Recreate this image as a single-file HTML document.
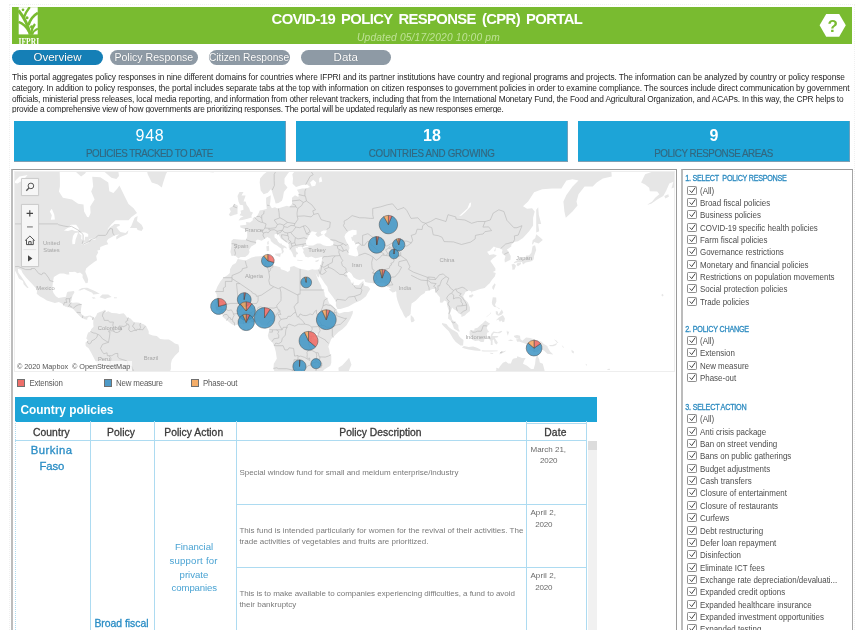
<!DOCTYPE html>
<html><head><meta charset="utf-8"><title>COVID-19 Policy Response (CPR) Portal</title>
<style>
html,body{margin:0;padding:0;background:#fff;}
body{width:867px;height:630px;overflow:hidden;position:relative;font-family:"Liberation Sans", sans-serif;color:#333;}
div,span{box-sizing:border-box;}
#root{position:absolute;left:0;top:0;width:867px;height:630px;overflow:hidden;will-change:transform;}
.abs{position:absolute;}
.t{position:absolute;white-space:nowrap;}
#hdr{position:absolute;left:12px;top:7px;width:840px;height:37px;background:#79bb30;overflow:hidden;}
.pill{position:absolute;top:50px;height:15px;border-radius:8px;color:#fff;font-size:11.5px;line-height:15px;text-align:center;white-space:nowrap;text-shadow:0 0 1px rgba(0,0,0,.35);}
.kpi{position:absolute;top:121px;height:40.6px;background:#1da4d7;border-bottom:1px solid #7f9fb2;border-right:1px solid #6f9fba;}
.cb{position:absolute;left:687.2px;width:9.7px;height:9.2px;border:1px solid #8f8f8f;border-radius:1.2px;background:#fff;}
.cb svg{position:absolute;left:-0.6px;top:-0.6px;}
.lg{position:absolute;top:379.3px;width:8px;height:8px;border:1px solid #6f6f6f;}
.vl{position:absolute;width:1px;background:#addbf1;}
.hl{position:absolute;height:1px;background:#addbf1;}
.ctrl{position:absolute;left:21.2px;width:17.4px;background:#f6f6f6;border:1px solid #cdcdcd;border-radius:1px;box-shadow:0 0 1px rgba(0,0,0,.15);}
</style></head><body><div id="root">
<div class="abs" style="left:9px;top:4px;width:846px;height:1px;border-top:1px dotted #f0f0f0"></div>
<div class="abs" style="left:9px;top:4px;width:1px;height:626px;border-left:1px dotted #f0f0f0"></div>
<div class="abs" style="left:854px;top:4px;width:1px;height:626px;border-left:1px dotted #f0f0f0"></div>
<div id="hdr">
  <svg class="abs" style="left:6px;top:0" width="22" height="37" viewBox="0 0 22 37">
    <rect x="0.7" y="0.2" width="19" height="27.2" fill="#fff"/>
    <g fill="none" stroke="#79bb30" stroke-linecap="butt">
      <path d="M12.2 27.6C10.5 20 6.5 10.5 0.5 3.4" stroke-width="3"/>
      <path d="M5.6 11C7 7 9 3.4 11.8 0" stroke-width="2.3"/>
      <path d="M10.8 24.6C8.5 19.8 4.5 16.3 0.5 14.9" stroke-width="2.2"/>
      <path d="M10.4 18.2C12 13 15.5 8.3 19.9 5.8" stroke-width="2.7"/>
      <path d="M12.9 27.6C13.2 23.5 14.6 20 17 17" stroke-width="2.2"/>
      <path d="M14 27.6C15.2 24.8 17.2 22.7 19.9 21.6" stroke-width="2"/>
    </g>
    <g fill="#79bb30"><circle cx="5" cy="2.8" r="1.35"/><circle cx="9" cy="10.7" r="1.55"/><circle cx="13.7" cy="20" r="1.7"/></g>
    <text x="0.5" y="37.7" font-family='"Liberation Serif", serif' font-size="11" font-weight="bold" fill="#fff" textLength="20.6" lengthAdjust="spacingAndGlyphs">IFPRI</text>
  </svg>
<div class="t" style="left:259.60px;top:4.00px;font-size:14.80px;line-height:16.00px;color:#fff;letter-spacing:-0.605px;word-spacing:2.60px;font-weight:bold;">COVID-19 POLICY RESPONSE (CPR) PORTAL</div>
<div class="t" style="left:345.00px;top:25.00px;font-size:10.20px;line-height:11.00px;color:#bfe296;letter-spacing:0.192px;font-style:italic;">Updated 05/17/2020 10:00 pm</div>
  <svg class="abs" style="left:806px;top:6px" width="30" height="26" viewBox="0 0 30 26">
    <path d="M1.6 12.3L8.2 0.9H21.2L27.8 12.3L21.2 23.7H8.2Z" fill="#fff"/>
    <text x="14.7" y="18.6" text-anchor="middle" font-family='"Liberation Sans", sans-serif' font-weight="bold" font-size="17" fill="#79bb30">?</text>
  </svg>
</div>
<div class="pill" style="left:12px;width:91px;background:#157fb6;">Overview</div>
<div class="pill" style="left:110px;width:87.5px;background:#8e9aa5;"><span style="display:inline-block;transform:scaleX(0.92)">Policy Response</span></div>
<div class="pill" style="left:208.5px;width:81.5px;background:#8e9aa5;"><span style="display:inline-block;transform:scaleX(0.89);margin:0 -10px">Citizen Response</span></div>
<div class="pill" style="left:300.5px;width:90.5px;background:#8e9aa5;">Data</div>
<div class="abs" style="left:0;top:66px;width:867px;height:47.3px;overflow:hidden">
<div class="t" style="left:12.00px;top:6.00px;font-size:8.30px;line-height:10.00px;color:#262626;letter-spacing:-0.075px;">This portal aggregates policy responses in nine different domains for countries where IFPRI and its partner institutions have country and regional programs and projects. The information can be analyzed by country or policy response</div>
<div class="t" style="left:12.00px;top:17.00px;font-size:8.30px;line-height:10.00px;color:#262626;letter-spacing:-0.125px;">category. In addition to policy responses, the portal includes separate tabs at the top with information on citizen responses to government policies in order to examine compliance. The sources include direct communication by government</div>
<div class="t" style="left:12.00px;top:28.00px;font-size:8.30px;line-height:10.00px;color:#262626;letter-spacing:-0.156px;">officials, ministerial press releases, local media reporting, and information from other relevant trackers, including that from the International Monetary Fund, the Food and Agricultural Organization, and ACAPs. In this way, the CPR helps to</div>
<div class="t" style="left:12.00px;top:38.00px;font-size:8.30px;line-height:10.00px;color:#262626;letter-spacing:-0.201px;">provide a comprehensive view of how governments are prioritizing responses. The portal will be updated regularly as new responses emerge.</div>
</div>
<div class="kpi" style="left:14.0px;width:272.0px"></div>
<div class="t" style="left:135.50px;top:127.00px;font-size:16.00px;line-height:17.00px;color:#fff;letter-spacing:0.768px;">948</div>
<div class="t" style="left:86.00px;top:148.00px;font-size:9.80px;line-height:11.00px;color:#33677f;letter-spacing:-0.498px;transform:scaleY(1.150);transform-origin:0 9px;-webkit-text-stroke:0.15px #33677f;">POLICIES TRACKED TO DATE</div>
<div class="kpi" style="left:296.0px;width:272.0px"></div>
<div class="t" style="left:423.10px;top:127.00px;font-size:16.00px;line-height:17.00px;color:#fff;font-weight:bold;">18</div>
<div class="t" style="left:368.85px;top:148.00px;font-size:9.80px;line-height:11.00px;color:#33677f;letter-spacing:-0.312px;transform:scaleY(1.150);transform-origin:0 9px;-webkit-text-stroke:0.15px #33677f;">COUNTRIES AND GROWING</div>
<div class="kpi" style="left:578.0px;width:272.0px"></div>
<div class="t" style="left:709.55px;top:127.00px;font-size:16.00px;line-height:17.00px;color:#fff;font-weight:bold;">9</div>
<div class="t" style="left:654.30px;top:148.00px;font-size:9.80px;line-height:11.00px;color:#33677f;letter-spacing:-0.461px;transform:scaleY(1.150);transform-origin:0 9px;-webkit-text-stroke:0.15px #33677f;">POLICY RESPONSE AREAS</div>
<div class="abs" style="left:11px;top:169px;width:666px;height:470px;border-top:1px solid #9a9a9a;border-right:1px solid #9a9a9a;border-left:2px solid #bdbdbd;background:#fff"></div>
<div class="abs" style="left:14px;top:171px;width:661px;height:201px;border:1px solid #eeeeee"></div>
<svg style="position:absolute;left:15px;top:172px" width="659" height="199" viewBox="0 0 659 199"><rect width="659" height="199" fill="#fff"/><path d="M-47.9 -44.3L42.9 -44.3L44.9 6.5L44.9 14.6L43.9 19.6L47.9 25.8L57.0 27.6L63.1 31.8L68.5 32.5L69.1 39.5L72.2 44.9L73.8 45.2L75.6 41.1L75.2 34.5L79.6 27.6L76.2 19.6L78.2 14.6L77.2 4.8L85.3 5.3L93.3 10.6L94.3 19.2L98.4 21.1L102.4 16.5L104.4 13.4L109.5 24.0L113.5 32.1L118.6 36.2L122.0 41.1L116.5 44.9L113.5 48.3L100.6 48.3L96.4 52.2L92.3 57.2L95.4 54.9L99.4 51.9L104.4 51.9L104.8 53.7L101.4 54.9L103.4 57.7L105.4 60.0L110.5 61.1L113.5 58.3L112.5 61.7L111.5 62.5L105.4 65.0L101.4 67.5L101.2 64.8L104.4 62.3L99.4 63.4L93.3 66.9L91.7 69.3L93.3 72.2L90.3 73.0L85.3 75.1L84.9 77.9L82.2 78.4L83.2 80.4L81.2 84.1L82.0 88.3L79.2 89.9L77.2 91.6L74.2 93.7L71.1 96.5L70.3 99.7L72.2 104.4L73.2 107.7L72.6 110.9L70.7 111.2L69.5 109.0L67.5 105.5L67.7 102.8L65.1 100.6L62.5 101.2L60.0 99.7L57.0 99.9L54.0 100.1L54.4 102.4L52.0 102.6L48.9 101.5L44.9 101.5L42.5 102.8L38.9 105.0L38.0 109.4L37.2 116.9L38.5 121.1L40.9 124.3L43.5 125.9L47.9 125.3L51.0 124.7L52.0 120.5L53.0 119.7L59.0 119.0L59.4 120.5L57.6 123.6L57.0 125.7L56.4 128.4L55.4 130.6L58.0 130.8L61.1 130.6L64.1 130.8L66.7 132.4L66.1 136.5L65.7 139.5L66.1 141.5L68.1 143.8L70.1 144.6L73.2 143.8L75.2 143.4L78.2 145.0L79.2 146.4L78.4 148.4L76.8 145.8L74.2 144.6L72.4 146.0L72.2 147.8L69.7 147.2L67.5 146.0L65.9 145.2L63.1 142.4L61.5 140.7L58.0 136.7L56.0 136.1L53.0 135.1L50.0 134.5L46.9 131.4L43.9 130.0L39.9 131.0L35.8 129.8L31.8 128.4L28.8 126.5L24.7 124.3L21.7 121.8L22.1 119.0L20.7 115.9L16.7 111.6L13.6 108.3L10.6 105.0L7.6 101.0L6.2 97.8L2.9 96.7L3.3 100.6L6.6 105.0L9.6 109.4L11.6 113.1L13.6 115.7L12.2 115.9L8.6 112.2L8.0 109.0L3.9 106.6L2.5 103.3L0.5 99.4L-1.7 94.9L-4.3 91.3L-8.6 90.2L-11.6 84.6L-12.6 82.2L-15.6 75.9L-16.2 69.3L-15.6 60.0L-17.0 53.7L-13.6 51.9L-27.7 32.8L-37.8 22.2L-47.9 14.6ZM73.2 -44.3L77.2 -2.1L85.3 -4.4L89.3 -0.3L96.4 5.7L101.4 6.9L104.0 4.0L103.4 0.1L106.5 -4.4L110.5 -11.4L109.5 -44.3ZM59.0 -2.1L62.1 1.0L66.1 4.4L70.1 1.4L72.2 -2.1L69.1 -11.4L61.1 -11.4ZM146.8 15.4L142.8 12.6L136.7 10.6L132.7 2.3L129.7 -11.4L157.9 -11.4L150.9 2.3L148.2 10.6ZM114.9 56.0L116.5 53.4L119.6 45.8L122.6 43.9L122.0 48.9L126.6 52.8L128.3 56.3L126.6 58.9L122.6 58.0L121.6 56.0ZM63.1 118.2L67.1 115.9L72.2 115.7L79.2 118.8L84.9 121.8L78.2 122.4L77.2 120.7L72.2 118.4L69.1 117.1L65.1 118.4ZM84.5 125.3L87.3 122.4L93.3 122.6L96.6 125.1L92.3 125.9L90.3 126.9ZM76.6 125.5L79.2 125.3L80.8 126.3L78.2 126.7ZM99.0 125.3L102.2 125.5L101.8 126.3L99.0 126.3ZM79.2 146.4L81.2 143.8L82.2 141.3L84.9 140.1L87.3 139.3L89.9 137.7L90.7 139.5L89.7 140.7L93.3 139.3L96.8 140.9L101.4 141.3L104.4 142.1L108.5 141.3L109.9 142.4L111.9 145.2L115.5 146.4L119.0 150.3L123.6 150.5L128.7 152.3L131.1 153.9L133.7 159.2L133.7 162.1L137.7 163.5L141.8 164.1L145.2 167.0L149.8 167.6L153.9 167.6L156.9 169.3L159.9 171.5L163.4 172.5L164.2 175.8L164.0 179.8L159.9 183.7L156.9 187.7L155.9 191.8L155.9 196.9L154.5 201.0L152.9 204.1L151.9 206.2L150.9 214.8L92.3 214.8L92.7 202.0L92.5 198.5L90.3 196.4L85.3 193.8L80.8 189.7L78.8 185.7L76.2 180.8L73.6 176.2L70.7 173.9L70.5 170.5L73.2 168.6L71.3 166.4L72.2 163.1L73.2 160.5L75.4 159.8L76.2 157.2L78.6 154.7L78.2 151.3L78.4 148.4L76.8 145.8ZM222.7 87.1L230.6 88.5L236.6 85.4L240.7 84.4L248.7 84.1L254.8 83.4L256.8 84.1L255.2 85.4L256.0 87.8L254.8 91.3L256.8 93.2L260.8 93.9L265.3 95.3L265.9 97.2L269.9 98.5L272.9 99.9L275.0 98.3L275.2 94.9L279.0 93.9L281.4 95.3L285.1 96.7L290.1 97.8L293.1 98.5L297.2 97.2L299.8 97.8L303.6 97.6L305.0 101.7L303.8 105.5L302.4 104.6L300.4 100.8L302.2 105.5L303.2 108.3L306.2 113.7L306.6 115.9L309.3 120.1L309.9 124.3L312.3 126.3L314.3 131.4L317.3 133.4L320.4 136.5L322.0 137.5L321.8 139.5L324.4 141.5L329.4 140.1L333.5 139.9L337.9 138.7L337.7 141.5L335.5 146.4L331.5 153.3L327.4 157.2L323.4 160.1L319.4 164.1L316.3 167.0L314.7 170.9L313.3 174.8L314.3 177.8L314.9 181.8L316.3 183.7L316.3 190.8L315.3 193.8L309.3 197.5L305.2 202.0L305.2 206.2L306.2 214.8L263.9 214.8L263.7 206.2L260.8 202.0L258.4 196.9L258.8 191.8L261.8 186.7L260.8 179.8L259.2 173.9L257.8 170.9L253.8 167.0L252.8 163.5L253.8 160.1L254.4 156.2L252.8 153.9L248.7 153.5L246.7 153.7L243.7 149.8L239.6 149.8L236.6 150.3L232.6 151.9L228.5 152.3L224.5 151.9L219.5 153.5L216.4 151.9L212.4 148.8L208.4 145.4L207.4 142.4L204.3 140.5L200.9 137.5L200.7 135.5L199.3 133.0L201.3 130.4L201.7 125.3L201.7 122.2L200.3 120.1L202.3 114.8L205.3 109.4L208.4 105.7L212.4 103.3L214.8 101.0L215.0 97.2L217.4 93.0L220.9 91.1ZM334.1 185.7L336.5 192.8L334.5 196.9L332.5 204.1L330.5 210.5L325.4 213.7L322.4 208.3L324.0 202.0L323.4 195.8L327.4 193.2L331.5 188.7ZM216.4 68.8L218.5 66.9L226.5 67.7L231.0 67.7L232.2 64.8L232.2 60.6L229.6 56.9L225.5 55.4L225.1 53.4L231.4 52.8L231.0 50.1L235.0 50.4L237.8 48.3L237.8 46.1L241.7 44.6L243.7 41.1L244.7 38.5L248.7 37.8L251.8 36.8L251.1 31.1L251.1 25.8L255.8 23.3L255.4 29.4L254.8 32.8L256.8 36.2L259.8 35.2L262.9 36.5L266.9 35.2L271.9 33.8L274.6 34.8L277.0 32.1L277.0 25.8L280.0 23.3L283.4 25.1L283.8 21.1L282.0 17.7L287.1 16.5L291.1 16.5L295.1 15.0L292.1 12.6L287.1 13.0L281.0 15.0L277.6 11.8L278.0 6.5L277.4 2.3L280.0 -1.2L285.1 -6.6L283.0 -10.4L279.0 -9.0L277.6 -4.4L272.9 1.4L269.5 6.5L269.5 11.8L272.5 15.4L268.9 19.9L267.9 25.8L266.9 28.7L263.5 31.1L260.6 31.4L259.8 28.3L257.8 22.2L256.8 18.4L255.8 17.3L252.8 20.7L248.7 22.2L245.7 18.4L244.7 10.6L245.1 6.5L248.7 2.3L252.8 -0.8L255.8 -4.4L258.8 -11.4L258.8 -44.3L628.1 -44.3L618.0 -11.4L612.0 -4.4L601.9 -9.0L595.8 -5.7L596.8 4.4L587.8 6.5L581.7 10.6L577.7 14.6L569.6 14.6L563.5 22.2L561.5 29.4L562.5 33.5L557.5 39.5L550.8 45.8L549.4 39.5L548.4 29.4L551.4 22.9L557.5 14.6L563.5 8.6L557.5 7.3L551.4 8.6L546.4 16.5L537.3 16.5L527.2 17.3L519.1 20.3L513.1 29.4L508.0 34.2L512.1 36.8L517.1 36.2L519.7 39.5L518.1 45.8L518.1 53.4L514.1 59.2L508.0 66.1L503.0 69.3L499.0 70.1L496.3 72.8L496.3 74.6L491.9 77.4L493.9 80.4L495.7 84.1L495.5 87.8L492.9 89.0L489.9 90.4L489.5 87.8L490.5 84.1L487.9 82.2L486.8 80.4L487.5 77.9L485.4 76.6L480.8 75.4L478.8 79.2L480.4 79.2L480.8 75.4L478.8 74.6L474.7 78.7L472.1 79.7L474.3 82.9L478.4 82.2L481.8 83.2L480.8 84.6L477.8 86.6L475.3 89.0L477.8 92.5L480.4 96.5L480.4 98.8L477.8 99.9L480.8 101.0L479.8 104.4L476.8 108.1L474.7 111.2L472.7 112.9L469.7 115.9L465.3 117.1L463.6 117.6L459.6 119.0L457.2 119.5L457.0 121.6L456.2 119.3L453.6 118.6L450.5 120.1L449.7 121.8L448.1 124.3L449.5 126.9L452.9 130.4L455.0 135.5L455.0 139.1L451.5 141.7L449.9 143.4L446.5 145.0L446.3 142.4L443.5 141.3L441.4 138.5L438.4 137.1L437.4 135.5L436.4 137.5L435.0 141.5L436.2 143.8L437.4 148.0L440.4 150.0L443.3 153.3L443.5 156.8L444.9 159.4L443.5 159.6L439.0 156.6L437.0 151.3L435.8 148.8L433.0 146.4L433.4 142.4L433.8 138.5L432.4 134.5L431.6 129.4L429.3 128.6L427.3 130.8L424.9 130.4L424.9 125.3L422.3 122.2L420.3 119.0L419.9 116.9L417.2 116.9L414.2 118.4L410.2 119.3L409.8 121.1L406.1 123.2L400.7 128.8L396.6 131.4L396.0 135.5L395.6 141.9L394.0 143.8L392.4 144.6L391.0 146.2L389.0 143.4L387.0 139.1L385.5 136.5L383.9 132.4L382.5 128.4L381.5 124.3L381.3 120.1L380.9 119.0L379.9 120.1L377.5 120.5L373.8 117.4L375.9 116.7L372.8 114.8L370.4 112.2L368.8 110.7L363.8 110.9L358.7 111.2L353.7 110.7L350.2 109.9L349.2 107.0L344.6 108.1L341.6 107.2L338.5 105.3L336.5 101.7L334.5 100.1L333.1 99.9L331.5 100.8L331.5 102.8L333.1 105.5L335.5 107.9L335.9 110.1L337.5 111.6L338.1 109.2L338.7 111.6L338.5 113.1L343.6 113.3L347.6 109.4L348.4 108.8L348.4 112.0L349.6 113.7L353.1 114.6L355.3 117.1L352.7 121.1L351.0 124.3L348.6 126.3L345.6 128.4L340.1 130.8L333.5 134.5L325.4 136.9L322.4 137.1L320.8 133.4L321.0 129.4L317.3 124.3L313.3 119.0L312.3 114.8L309.7 111.6L306.2 106.1L305.2 105.0L305.0 101.7L303.8 97.6L304.6 96.0L305.2 93.7L306.2 91.3L307.0 87.8L307.4 85.1L306.2 85.1L303.2 85.8L300.2 86.3L296.4 84.6L293.1 85.4L290.1 84.6L289.7 82.9L288.1 80.4L288.7 77.9L287.5 76.6L287.1 74.6L283.0 75.1L282.4 76.6L280.6 75.6L281.0 79.2L283.0 80.9L283.0 82.4L282.0 81.7L281.2 83.2L281.0 85.1L280.0 85.4L278.4 84.6L278.0 82.9L277.0 80.4L275.0 77.4L273.7 75.4L273.7 72.0L271.9 70.4L268.9 68.8L265.9 66.7L264.9 64.8L263.5 62.5L262.0 63.4L262.2 61.4L259.4 62.5L259.6 65.6L262.0 67.2L262.9 69.6L264.9 71.5L266.9 71.7L266.9 72.8L269.9 74.1L271.9 75.9L271.7 76.6L268.9 75.4L268.1 77.4L268.9 79.2L267.9 81.2L266.3 81.7L266.9 79.7L266.1 76.6L263.5 74.8L262.0 73.6L259.2 72.0L255.8 69.1L255.4 66.7L252.4 65.0L249.7 66.7L246.7 68.8L242.7 67.5L240.7 68.8L241.1 71.7L236.2 74.6L234.0 77.9L234.6 79.9L233.2 82.7L230.2 84.9L225.5 84.9L223.3 86.6L221.9 84.9L219.7 83.6L216.6 84.1L215.4 79.9L216.4 74.1ZM622.1 -11.4L627.3 -4.4L636.2 -4.4L636.6 0.1L630.1 2.3L628.1 6.5L626.1 10.6L630.1 12.6L634.2 15.8L634.8 19.2L642.2 19.6L644.3 22.2L640.2 25.8L637.2 29.4L632.1 32.8L636.2 31.8L642.2 27.6L648.3 24.0L651.3 18.4L654.3 11.4L658.4 9.8L656.4 16.5L661.4 14.6L666.5 12.6L670.5 13.8L674.5 14.6L682.6 16.5L682.6 -44.3L622.1 -44.3ZM223.5 48.6L227.5 48.0L232.6 46.7L237.2 45.2L236.2 44.3L238.0 40.4L235.2 39.5L234.2 36.2L231.6 32.8L230.6 29.4L228.5 29.4L230.6 23.6L226.5 23.6L228.5 19.9L224.5 19.9L222.5 24.0L223.5 29.4L224.9 32.8L228.1 33.2L228.5 37.8L225.5 38.8L226.1 41.1L224.5 43.3L228.5 44.3L225.5 45.8ZM222.5 42.0L222.5 37.8L222.9 33.8L219.5 31.8L217.4 34.5L214.4 36.2L215.8 39.5L213.8 42.7L215.4 44.3L219.5 42.7ZM190.2 -1.7L194.2 0.1L198.3 0.5L204.3 -3.4L206.3 -11.4L186.2 -11.4ZM259.8 81.7L265.9 81.2L265.1 84.9L260.8 83.4ZM251.3 74.3L254.0 73.8L254.2 78.7L251.8 79.2ZM252.2 69.9L253.6 68.8L253.8 72.2L252.4 72.8ZM282.2 87.8L287.5 88.3L287.5 89.0L282.2 88.5ZM299.8 89.0L304.2 87.5L303.2 89.2L301.2 89.9ZM395.8 143.0L398.5 145.4L399.7 148.4L398.1 150.0L396.2 150.3L395.6 147.4ZM454.0 123.6L457.6 122.2L458.6 123.2L456.6 125.5L454.2 125.3ZM479.8 111.2L480.6 112.7L478.6 118.0L477.2 116.3L477.4 114.2ZM498.8 91.3L502.0 90.6L507.0 89.9L508.0 92.5L510.7 90.4L514.5 89.7L517.1 89.0L518.7 87.3L519.1 84.1L520.1 80.9L521.2 77.9L520.1 73.3L517.7 74.1L517.1 76.6L516.5 80.4L514.1 83.4L511.1 83.4L511.1 84.6L509.0 86.6L508.0 87.5L503.0 87.8L499.0 90.2ZM517.7 72.8L519.1 70.1L523.6 71.5L527.8 68.0L525.8 66.1L521.2 62.3L520.3 66.1L517.7 68.3L517.1 71.5ZM496.5 92.5L499.0 91.8L501.0 93.7L499.6 97.4L497.3 97.8L497.3 94.9ZM502.0 91.3L506.0 90.6L506.0 92.1L503.0 94.2L501.6 93.0ZM521.2 60.6L524.2 59.2L523.2 51.9L526.2 51.9L523.8 42.7L523.2 35.2L521.2 37.8L521.2 48.9L521.2 54.9ZM477.8 125.3L481.2 125.5L481.4 129.4L480.0 132.4L480.8 134.5L484.8 136.5L484.4 137.3L481.8 135.3L479.2 135.1L477.4 132.8L476.8 130.4ZM480.8 148.4L483.8 145.4L487.9 143.0L489.9 146.4L489.3 149.8L487.5 150.3L486.8 148.4L484.8 149.8L483.4 147.4ZM480.8 138.9L482.8 139.5L483.4 142.4L484.8 140.5L486.8 137.5L488.3 140.5L486.8 142.4L483.8 143.8L481.8 143.0L480.8 141.5ZM471.1 145.6L475.8 141.5L476.2 139.9L474.7 141.9L471.7 144.4ZM454.6 159.2L456.0 158.2L459.2 158.6L459.6 156.6L462.6 155.8L465.7 152.7L467.7 151.3L470.3 148.6L471.7 149.4L475.1 151.7L472.7 153.7L471.7 155.8L472.7 158.2L474.3 160.1L472.3 160.5L471.7 163.1L469.7 165.0L469.3 168.0L468.7 169.9L465.9 170.1L463.6 168.6L460.2 168.9L457.0 167.6L456.6 165.0L454.6 163.1ZM426.9 151.1L431.4 151.9L433.8 154.9L437.0 157.6L439.4 158.8L442.5 160.7L444.1 163.9L445.5 165.8L448.5 168.0L448.1 173.5L445.5 173.5L440.8 169.9L438.0 166.4L436.0 163.1L433.8 159.2L430.7 156.2L427.3 152.7ZM446.9 175.4L448.9 173.9L453.6 175.0L458.2 174.6L462.0 175.8L465.5 177.4L465.5 179.0L459.6 178.4L453.6 177.4L449.5 176.6ZM475.8 172.9L475.8 168.9L474.5 167.6L476.4 161.7L478.4 159.6L482.8 160.3L486.4 158.8L487.3 159.4L484.8 161.3L478.8 161.1L477.2 163.9L479.8 163.9L483.4 163.9L482.4 165.4L479.8 165.8L481.4 168.6L482.8 170.5L481.8 172.5L479.8 171.3L478.8 167.4L477.6 168.0L477.6 172.9ZM491.9 158.2L492.9 160.1L494.3 159.2L493.5 161.5L492.9 163.7L492.1 161.5L491.7 160.1ZM466.7 178.2L470.1 178.4L474.7 178.4L478.8 178.6L482.8 178.4L482.4 179.2L476.8 179.4L472.7 179.6L468.7 179.6L466.7 179.2ZM483.8 182.3L486.8 179.8L491.3 178.6L489.9 179.8L485.8 182.1ZM474.7 180.8L477.8 181.0L478.4 182.1L475.8 181.8ZM492.7 168.4L495.9 167.6L498.6 168.8L495.9 168.9ZM499.0 163.7L502.0 162.9L505.0 163.7L505.4 167.0L507.4 168.8L511.1 165.4L515.1 166.0L519.1 167.2L523.2 168.8L526.2 169.5L528.8 171.9L532.3 173.9L532.9 175.8L535.3 179.8L538.3 182.5L536.3 182.3L532.3 181.8L529.2 178.8L526.2 177.2L524.2 179.0L522.2 180.2L519.1 180.0L516.1 178.2L513.1 178.4L514.7 175.8L513.1 172.9L508.6 170.9L504.0 169.5L502.6 169.9L501.0 167.6L504.0 166.8L501.4 166.4L499.0 164.8ZM533.9 173.1L537.3 172.9L540.3 171.9L541.9 170.5L541.3 172.9L538.3 174.2L535.3 174.2ZM538.9 167.2L541.3 168.6L543.4 170.9L542.5 171.1L540.3 168.8ZM546.6 172.9L549.2 175.4L548.0 175.4ZM556.5 177.8L559.1 179.8L558.5 181.4L556.7 180.2ZM463.6 214.8L464.0 207.3L465.1 205.8L469.7 203.3L474.3 202.4L478.8 201.2L481.4 197.9L481.2 195.8L483.8 196.4L484.8 194.4L487.9 190.8L490.9 189.5L493.3 191.4L495.9 191.6L497.3 187.7L498.6 186.5L502.0 185.9L502.2 184.3L507.0 186.1L510.7 186.1L509.0 188.7L508.0 191.8L512.1 193.8L516.1 196.9L518.7 196.9L520.1 191.8L520.6 186.7L522.2 183.3L524.2 187.3L524.8 190.6L527.8 191.8L529.2 196.9L529.8 199.7L533.3 202.0L536.3 206.2L538.9 209.4L543.4 214.8ZM646.3 123.0L647.5 121.8L648.7 123.2L647.3 124.5ZM649.3 24.0L653.3 22.2L653.9 24.7L650.3 26.5ZM565.6 202.2L568.6 204.5L571.6 206.8L569.6 206.2L566.6 204.1ZM570.8 191.8L572.0 192.8L571.6 193.8L570.8 193.0ZM592.4 196.9L594.8 196.7L595.0 198.1L592.6 198.1Z" fill="#e6e6e6"/>
<path d="M293.1 73.6L298.2 73.6L302.2 71.5L305.2 71.5L308.3 73.3L311.3 74.1L315.3 74.1L318.3 72.8L318.5 70.1L315.3 67.5L312.3 65.3L310.3 64.2L309.3 62.5L311.3 60.6L311.7 58.0L313.3 57.2L310.3 58.6L308.3 58.6L305.6 60.0L306.2 62.3L308.3 62.5L306.2 63.4L303.2 65.0L302.2 64.5L300.2 62.3L302.2 60.6L299.2 59.7L296.8 59.2L294.5 62.5L292.5 66.1L291.1 68.8L290.7 71.5L291.5 72.8ZM287.5 76.6L287.7 75.4L290.1 74.1L293.1 73.8L293.7 74.8L290.1 75.6ZM333.5 59.2L337.5 57.7L341.6 58.3L341.6 62.5L338.1 63.4L337.5 65.3L336.1 64.8L337.1 68.8L338.5 68.8L340.5 72.2L342.6 71.5L344.6 72.8L342.6 74.3L341.6 76.6L342.6 79.2L343.6 83.4L340.5 84.6L336.5 83.6L333.5 82.7L333.5 79.2L334.5 75.9L333.9 73.6L331.5 70.1L330.5 67.5L329.4 64.8L330.5 62.0ZM48.9 58.6L53.0 55.7L56.0 52.8L61.1 52.8L63.7 56.3L63.7 59.2L60.0 58.9L57.0 57.7L53.0 58.9ZM57.4 72.2L60.0 72.0L60.6 67.5L62.5 62.5L63.1 60.6L60.0 61.1L58.0 63.9L57.2 68.8ZM63.7 60.6L66.1 60.3L70.1 60.6L73.2 62.0L73.2 64.8L70.1 64.8L69.7 68.3L68.1 68.8L66.1 66.7L66.5 63.4L64.5 61.7ZM66.3 72.2L69.1 72.8L73.2 70.9L75.4 69.3L72.2 69.9L68.1 70.9ZM73.6 68.3L77.2 68.0L80.6 67.5L80.6 65.6L77.2 66.4L74.6 66.9ZM35.8 47.7L39.9 47.4L39.3 42.7L36.8 36.8L34.8 39.5L36.8 43.3ZM-13.6 -11.4L-7.6 -16.3L-3.5 -11.4L-7.6 -6.6ZM-1.5 10.6L4.5 4.4L12.6 3.1L8.6 7.8L2.5 11.4ZM299.2 167.0L298.8 163.1L300.8 161.5L303.2 161.7L303.2 165.0L301.6 167.4ZM444.1 43.9L446.5 43.6L450.5 40.1L455.6 34.5L456.2 30.4L454.6 31.1L452.5 36.2L448.5 40.1ZM296.8 14.6L300.2 13.8L301.2 10.6L298.2 7.8L295.1 10.6ZM304.2 10.6L307.2 9.4L306.2 4.4L304.2 6.5ZM92.3 57.2L95.4 54.9L99.4 51.9L96.4 53.1L93.3 57.5Z" fill="#ffffff"/>
<path d="M-13.6 51.9L42.5 51.9L43.7 52.8L48.9 54.0L54.0 54.9L56.4 54.3L63.5 58.3L64.1 59.2L66.1 60.6L68.1 62.5L68.1 68.8L67.1 71.5L68.1 72.2L75.2 69.1L75.2 68.0L80.2 66.1L83.2 63.4L90.3 63.4L91.7 62.3L93.3 59.2L95.0 56.6L97.4 56.9L97.8 61.1L99.4 63.4M-1.7 94.9L3.1 94.4L10.6 97.6L16.3 97.6L16.3 96.5L19.7 96.5L23.7 101.5L26.7 102.8L27.8 101.0L30.0 101.0L33.8 106.1L34.8 108.6L38.5 109.6M48.5 133.4L48.9 132.0L49.5 130.4L52.0 130.4L51.0 128.0L51.0 126.7L54.6 126.7L54.6 130.4L55.2 130.6M54.6 126.7L56.4 125.3M52.8 134.9L54.2 133.6L54.6 132.4L56.4 131.0M54.2 133.6L56.0 134.5L57.4 135.7M58.4 136.5L59.6 134.9L62.1 133.4L63.5 132.8L66.7 132.4M61.7 140.3L63.7 140.5L65.7 140.7M67.3 146.2L67.9 143.4M78.4 145.2L77.4 147.8M90.7 138.9L88.3 140.5L87.3 144.0L88.5 145.8L89.3 148.4L93.3 148.4L94.6 150.2L98.4 150.0L97.8 153.3L98.8 155.4L97.8 156.6L99.4 159.8M99.4 159.8L97.8 158.8L93.7 158.8L93.7 159.9L95.0 160.1L94.6 164.1L93.5 170.3M93.5 170.3L91.9 169.5L87.5 166.8L84.5 163.1L82.6 162.3M82.6 162.3L80.6 161.3L78.2 160.9L75.4 159.4M82.6 162.3L82.0 165.0L80.0 167.2L76.8 168.8L75.8 171.1L74.2 171.9L72.6 170.7L72.6 168.8M93.5 170.3L87.5 172.3L85.5 176.4L87.3 179.8L88.9 181.8L92.1 180.8L92.3 183.7L94.1 183.7M94.1 183.7L96.0 186.7L95.4 189.7L94.6 192.8L95.4 194.2L94.1 196.4L94.3 196.9M94.1 183.7L96.8 183.7L100.2 181.6L102.8 181.4L102.8 185.1L104.6 186.7L107.9 187.7L111.5 188.7L112.5 189.7L113.1 194.2L116.7 194.4L117.0 196.4L118.2 197.9L118.0 199.9L117.4 201.6M94.3 196.9L96.0 201.0L96.4 203.1M99.4 159.8L100.8 160.5L102.4 160.5L105.0 159.2L105.4 157.2L106.7 157.8L105.0 154.7L104.2 154.1L107.9 154.3L108.1 154.9L111.5 153.3L112.1 151.9M112.1 151.9L110.7 150.5L111.3 149.0L112.9 148.4L112.3 146.8L113.9 145.8M112.1 151.9L113.5 152.3L114.3 154.5L113.7 157.4L115.1 159.4L116.5 159.6L119.0 158.4L120.6 158.4M119.2 150.5L119.0 152.3L117.8 153.3L117.6 154.5L119.0 155.6L120.6 158.4M120.6 158.4L121.6 158.6L121.8 157.2L124.4 157.6M125.6 150.9L124.8 152.9L125.6 155.3L124.4 157.6M124.4 157.6L126.2 157.6L127.8 157.8L129.1 155.8L130.3 154.3M230.2 88.7L231.2 92.5L232.2 95.5L227.3 96.7L227.1 98.5L224.1 100.6L217.0 103.5L217.0 106.6M217.0 105.7L208.0 105.7M217.0 106.6L217.0 109.4L210.4 109.4L210.4 114.8L208.4 115.9L208.4 119.5L200.3 119.5M217.0 106.6L224.9 111.6M224.9 111.6L221.5 111.6L223.5 131.4L215.8 131.4L212.6 132.2L211.4 131.2L210.0 132.8M224.9 111.6L237.0 119.9L237.0 120.7L241.1 122.6L241.3 124.3L243.1 124.0M243.1 124.0L246.3 123.2L258.8 114.8M258.8 114.8L254.8 112.7L253.8 108.6L254.6 105.0L253.8 100.1M253.8 100.1L252.8 96.0L249.7 93.2L251.1 89.7L252.0 84.4M253.8 100.1L255.2 98.8L255.4 96.5L257.8 95.1L257.8 93.2M285.1 96.9L285.1 118.0L285.1 122.2L283.0 122.2L283.0 123.2M283.0 123.2L266.9 114.8L264.9 115.9M264.9 115.9L263.3 116.7L258.8 114.8M285.1 118.0L309.1 118.0M264.9 115.9L265.9 120.1L266.1 126.3L265.9 128.6L261.8 133.4L262.0 135.1M262.0 135.1L258.8 136.1L254.8 135.9L251.8 136.5L248.7 136.5L245.7 134.7L242.9 135.5L241.9 139.1M243.1 124.0L243.1 128.8L241.7 131.4L237.2 131.8L235.0 132.6M235.0 132.6L235.4 134.5L236.6 135.9L239.0 137.3L239.4 138.7L241.9 139.1M235.0 132.6L230.6 134.1L227.5 136.1L225.7 137.5L224.1 138.9L223.5 141.7M223.5 141.7L222.1 141.5L218.5 142.1M218.5 142.1L217.9 140.5L216.4 137.9L213.2 138.5L211.6 137.7M211.6 137.7L210.0 132.8M210.0 132.8L207.4 130.0L205.3 129.2L201.3 130.4M211.6 137.7L207.0 137.3L200.9 137.9M200.7 135.3L204.3 134.9L206.8 135.7L204.3 136.1L200.7 136.3M207.0 137.3L207.0 139.1L204.3 140.7M207.8 144.4L209.4 142.6L212.0 142.4L213.0 143.8L213.8 145.4M213.8 145.4L211.4 148.6M213.8 145.4L215.4 145.8L215.8 147.6L217.4 147.2M217.4 147.2L218.1 145.4L219.1 143.6L218.5 142.1M217.4 147.2L217.9 149.8L219.5 150.7L219.5 153.5M228.9 152.1L228.1 149.4L229.6 146.0L228.9 143.4L228.9 140.5M223.5 141.7L225.3 143.0L228.9 142.8M228.9 140.5L234.2 140.3M234.2 140.3L235.6 142.1L235.4 144.8L236.0 147.6L237.0 150.2M236.4 140.5L237.8 144.4L237.8 150.0M234.2 140.3L236.4 140.5L239.4 138.7M241.9 139.1L242.3 141.5L240.0 144.4L240.0 149.6M262.0 135.1L263.3 137.5L264.1 139.5L261.4 142.4L260.4 145.0L259.2 145.6L257.8 148.8L255.8 148.4L254.2 149.6L252.0 152.7M263.3 137.5L264.9 138.3L264.9 140.9L265.9 142.4L262.9 142.4L265.3 146.4L265.9 147.4M265.9 147.4L272.1 146.4L272.9 144.4L275.8 144.2L279.0 140.9L280.8 140.5M280.8 140.5L280.0 137.3L279.0 134.9L282.0 131.0L283.0 131.0L283.0 123.2M265.9 147.4L263.9 150.3L264.1 152.5L267.1 157.8M254.4 157.6L257.4 157.8L261.4 157.8L267.1 157.8M254.4 160.1L257.4 160.1L257.4 157.8M257.0 169.7L258.8 166.8L263.7 166.0L263.7 163.1L262.7 161.7L263.9 159.6L261.4 157.8M259.2 173.5L260.8 171.1L263.7 171.7L266.5 169.9L267.3 166.4L270.3 163.1L270.9 157.6L272.1 155.3L272.1 153.7M267.1 157.8L268.3 155.3L272.1 155.3M272.1 153.7L274.0 152.1L279.8 154.1L283.8 152.1L285.7 152.3L289.9 152.1M280.8 140.5L282.4 145.0L283.4 145.0L285.5 146.8L287.9 149.2L289.9 152.1M283.4 145.0L285.1 141.9L288.1 143.4L291.1 143.6L293.1 143.0L295.1 141.9L297.6 142.8L300.0 139.1L301.6 138.1L301.4 141.1L303.0 143.4M303.0 143.4L303.4 141.5L305.0 140.7L306.8 137.1L308.1 133.8M308.1 133.8L308.3 132.0L309.3 128.2L312.5 126.3M308.1 133.8L311.1 132.6L313.3 133.2L315.7 133.4L318.8 135.9L320.2 137.5M320.2 137.5L319.0 140.5L321.2 140.7L321.8 139.5M321.2 140.7L321.4 143.4L323.4 144.4L329.4 146.4L331.5 146.4L325.4 152.3L321.4 153.1L319.4 154.1M319.4 154.1L317.3 154.5L314.3 155.4L311.3 155.1L309.1 153.5L307.2 153.5L307.0 153.1M303.0 143.4L303.4 145.6L301.2 146.8L304.6 149.0L305.8 151.5L307.0 153.1M307.0 153.1L304.0 153.7L303.2 153.9L302.2 154.7L297.2 154.9L297.0 155.3M297.0 155.3L294.1 153.1L289.9 152.1M319.4 154.1L317.3 156.4L317.3 163.7L318.5 165.4M303.2 153.9L304.4 156.2L305.2 158.8L303.2 161.7L303.0 164.1M303.0 164.1L310.7 168.2L310.7 168.9L313.7 171.3M297.0 155.3L297.2 157.4L294.9 160.9L294.3 164.8M303.0 164.1L296.8 164.1L294.3 164.8M294.3 164.8L296.1 166.6L296.8 164.1M293.1 167.6L296.1 166.6L295.5 168.8L296.8 168.6L295.9 170.7L293.7 170.7M294.3 164.8L293.1 167.6L293.7 170.7L294.1 173.9L296.8 178.4M296.8 178.4L301.0 180.6M301.0 180.6L303.2 180.8L304.2 184.7L305.0 184.9M305.0 184.9L310.3 185.1L313.3 184.1L316.1 182.7M296.8 178.4L292.9 178.8L291.9 180.4L292.3 182.7L291.9 185.5L293.1 186.5L294.7 186.1L294.7 188.5L292.1 186.9L289.5 185.3L285.7 184.1L283.8 184.5L283.0 183.5M283.0 183.5L279.6 184.1L278.6 176.4L274.0 175.8L272.9 177.8L269.9 178.0L268.1 173.7L260.8 173.7L259.2 173.5M283.0 183.5L283.0 187.7L279.0 187.7L279.0 194.2L281.8 197.1M258.4 196.4L261.8 195.8L263.3 196.7L271.7 196.7L277.0 197.9L281.8 197.1L285.7 197.5M301.0 180.6L301.8 183.3L301.2 186.9L300.6 188.9L301.6 189.7M301.6 189.7L295.5 191.8L295.9 193.0M295.9 193.0L292.9 193.8L289.1 197.9L285.7 197.5M295.9 193.0L301.0 195.2L301.2 197.9L300.6 199.9L300.2 204.1M301.6 189.7L304.2 190.8L306.8 193.8L305.8 195.8L303.8 193.8L304.2 190.8M305.0 184.9L304.4 188.7L306.8 191.0L306.8 193.8M285.7 197.5L277.0 198.5L277.0 206.2M285.7 197.5L290.1 203.1L293.9 206.6M231.0 67.7L236.0 69.6L241.1 70.4M216.6 71.7L218.1 71.7L222.1 72.5L220.7 76.1L219.5 77.7L220.5 81.2L219.7 83.6M239.6 45.5L243.1 48.9L246.3 50.4L247.5 50.4L251.1 51.9L249.9 56.0M249.9 56.0L246.9 60.0L248.7 60.9L247.9 63.1L249.7 66.7M249.9 56.0L254.0 56.3L255.8 56.3M248.7 60.9L251.8 60.0L252.8 61.1L255.8 58.0M255.8 58.0L259.2 57.7L262.2 59.2M254.0 56.3L253.8 57.7L255.8 58.0M249.1 38.8L248.7 42.0L246.7 43.3L246.7 46.4M241.5 44.6L244.7 44.3L246.7 46.4L247.5 50.4M252.0 33.2L254.4 33.5M263.3 36.5L264.1 40.8L264.3 44.3L264.9 45.8M264.9 45.8L259.2 48.0L262.4 52.5M262.4 52.5L260.8 55.7L255.8 56.3M264.9 45.8L268.7 47.7L272.5 50.4M262.4 52.5L264.9 51.9L268.7 53.1L268.9 54.6M268.7 53.1L272.5 50.4M272.5 50.4L280.0 51.6M280.0 51.6L283.0 47.1L282.2 44.3L282.0 41.1L282.8 36.5L282.0 35.5L280.6 34.8L274.6 34.8M268.9 54.6L267.9 57.7L267.1 58.3M268.9 54.6L272.5 55.4L276.0 53.4L279.2 53.7L280.0 51.6M279.2 53.7L280.8 55.1L277.4 59.7L275.6 60.3M275.6 60.3L272.5 60.9L269.9 60.6L267.1 58.3L262.2 59.2M262.2 59.2L262.0 61.7M267.1 58.3L266.1 60.0L262.0 62.0M272.5 60.9L272.9 63.7L267.9 62.8L266.5 62.8L266.9 65.6L270.1 68.8L271.9 70.1M272.9 63.7L273.7 65.3L273.3 67.5L275.6 69.3L273.7 71.7M275.6 69.3L276.2 71.7L277.0 74.3L275.0 77.4M276.2 71.7L279.8 70.7L280.8 73.3L277.0 74.3M280.8 55.1L284.8 55.7L288.3 54.0L291.5 62.0L294.5 62.5M288.3 54.0L290.7 53.7L293.5 56.3L295.1 59.5L291.5 62.0M280.4 65.6L283.0 66.9L289.1 65.8L292.3 66.9M275.6 60.3L278.0 63.4L280.4 65.6M280.8 73.3L284.0 72.8L287.7 72.2L288.3 73.3L287.1 74.6M287.7 72.2L291.1 71.5M280.4 65.6L279.8 69.3L279.8 70.7M282.2 44.3L289.1 43.9L296.1 44.9L298.8 42.4M298.8 42.4L303.2 41.4L306.2 47.7L311.3 49.2L315.3 50.1L314.7 55.4L311.7 57.5M298.8 42.4L297.8 38.8L300.6 37.8L296.8 32.8L291.5 29.0M282.8 36.5L286.7 33.5L288.3 30.4L291.5 29.0M277.0 29.0L284.8 28.0L288.3 30.4M280.6 34.8L280.4 33.2L277.6 31.8M283.6 22.5L289.9 24.0M291.5 29.0L290.5 24.4L289.9 24.0L289.9 19.2L291.1 16.5M290.7 12.6L295.1 4.4L298.2 2.7L295.1 -2.1L294.5 -11.4M283.2 -10.4L282.2 -11.4M257.2 18.1L259.4 13.4L259.2 8.6L259.2 2.3L262.9 -4.4L263.9 -11.4M219.5 32.1L218.5 34.5L221.9 35.8M307.4 86.6L308.7 84.6L312.3 84.6L317.3 83.9L320.2 83.9L325.0 83.6M325.0 83.6L323.8 80.4L324.2 77.4M324.2 77.4L322.6 76.4L322.4 73.8L318.3 72.8M315.3 67.7L320.4 68.3L323.4 69.9L328.2 71.7L331.1 73.6L332.7 72.0M322.4 73.8L325.4 73.3L328.2 71.7M325.4 73.3L326.6 74.6L328.4 77.9L327.6 79.4M324.2 77.4L327.6 79.4L331.5 77.7L333.3 80.7M325.0 83.6L326.4 86.6L327.8 88.7L326.4 90.2L327.4 93.7L331.1 96.5L330.9 98.5L332.5 100.8M320.2 83.9L317.7 86.6L317.3 90.4L312.9 92.8M312.9 92.8L313.7 95.5M313.7 95.5L316.1 96.2L319.4 98.1L324.8 102.4L328.4 102.6M328.4 102.6L330.3 100.6L331.5 100.6M328.4 102.6L330.5 103.9L332.3 103.9M312.9 92.8L308.9 95.3L306.6 94.4M305.4 93.5L306.6 94.4L306.2 97.2L305.2 101.7M307.0 89.9L308.3 90.2L307.2 93.0L306.6 94.4M313.7 95.5L309.3 97.2L311.3 99.4L310.3 100.6L307.4 102.4L305.2 101.9M303.6 97.6L305.0 101.7M321.0 129.6L322.0 127.3L324.4 127.5L328.2 128.0L330.5 128.4L333.5 125.1L339.5 124.3M339.5 124.3L345.6 122.2L347.0 118.0L346.0 116.5M339.5 124.3L341.8 129.2M346.0 116.5L340.7 116.1L338.7 113.5M346.0 116.5L347.2 113.7L347.8 112.2L348.4 111.8M337.1 112.2L337.9 112.5M343.4 83.4L345.2 82.9L350.0 81.2L354.3 82.9L358.1 85.1M358.1 85.1L356.7 90.2L356.9 93.7L357.3 97.2L359.3 98.3L357.5 101.0M357.5 101.0L360.7 102.1L362.1 106.8L361.3 108.1L359.3 109.0L358.9 111.2M357.5 101.0L363.8 101.7L368.4 100.8L369.2 97.8L374.4 96.2L374.9 93.7L376.5 93.0L375.9 91.3L378.1 90.6L379.1 88.5L378.3 86.3L380.9 84.6L384.9 84.1L385.7 83.6M358.1 85.1L361.1 88.3L364.8 85.8L367.2 82.9L368.8 83.2L371.4 83.6M371.4 83.6L374.4 83.9L376.3 81.9L378.5 80.9L379.1 84.9L382.5 83.2L385.7 83.6M368.8 83.2L368.8 81.7L364.2 79.2L360.5 76.6L357.7 73.6L355.9 73.0L355.9 70.9L352.9 69.3L351.2 70.9L349.6 73.3L347.6 73.3L347.6 63.4M347.6 73.3L346.4 73.3L344.0 70.7L341.6 71.2L340.5 72.0M347.6 63.4L352.9 61.7L357.9 65.3L359.7 67.5L365.6 66.9L368.0 68.8L367.8 71.5L371.8 74.1L373.8 73.0L377.7 70.7M377.7 70.7L382.9 68.8L385.9 69.1L391.8 69.1L396.4 70.9M396.4 70.9L392.0 74.1L389.8 74.1L385.5 75.4L383.5 77.2L383.3 78.2M383.3 78.2L385.7 80.7L385.7 83.6M377.7 70.7L377.9 73.6L381.9 74.6L379.5 76.1L376.9 76.1L374.4 74.6L373.8 76.1L377.1 77.7L383.3 78.2M373.8 76.1L370.6 77.9L372.6 81.2L371.4 83.6M332.3 59.2L328.4 53.7L329.4 51.3L329.0 49.2L332.7 47.1L337.1 43.6L344.6 45.8L349.6 45.8L355.5 46.4L358.5 46.4L357.7 42.7L357.7 36.5L365.8 34.8L372.2 32.8L377.5 31.8L382.5 37.8L389.0 35.5L391.8 38.5L396.0 46.4L402.9 45.8L406.7 50.1L410.8 51.3M410.8 51.3L407.7 53.7L407.1 57.5L402.1 57.2L400.7 62.0L396.2 63.4L397.7 68.3L396.4 70.9M410.8 51.3L415.6 49.5L420.9 46.4L431.0 49.5L433.0 42.7L440.8 44.9L441.0 47.1L449.9 48.0L456.6 51.3L462.6 49.5L470.1 49.5M410.8 51.3L413.2 54.3L416.8 55.7L418.2 62.8L423.3 63.7L427.1 65.3L429.1 69.6L438.4 69.9L446.5 72.5L455.6 70.1L460.2 66.9L460.4 63.4L465.7 62.3L468.1 62.0L469.9 59.7L476.6 58.6L473.7 54.9L467.9 55.1L470.1 49.5M470.1 49.5L475.3 48.0L478.2 41.1L483.8 37.8L488.9 39.5L491.9 48.3L498.8 55.7L502.0 55.7L507.0 53.7L503.2 63.1L499.4 63.9L499.6 67.5L498.2 70.4M498.2 70.4L496.3 70.4L492.9 71.5L490.7 72.0L485.6 76.6M489.1 82.4L493.7 80.2M385.7 83.6L391.6 87.8L395.0 94.9L393.4 97.2L398.3 100.1L412.4 105.3L413.8 105.0L419.7 105.5L420.5 107.5L424.3 102.8L428.3 101.9L431.0 104.6M396.2 103.3L402.7 106.6L406.1 108.1L412.4 108.6L412.4 105.3M413.8 105.0L413.8 107.2L420.5 107.5M391.6 87.8L383.9 89.7L383.5 93.7L386.6 95.3L384.9 98.3L383.7 100.6L379.7 105.0L376.7 105.0L374.9 107.2L376.3 110.1L377.9 112.9L373.4 113.1L372.2 114.6M412.4 108.6L414.2 109.0L415.8 110.9L421.1 111.6L418.6 114.4L420.9 115.9L420.9 119.0L420.9 120.7M412.4 108.6L412.4 111.6L414.0 115.5L414.2 118.4M431.0 104.6L426.7 107.9L425.5 111.2L424.5 114.0L422.9 113.7L423.1 118.0L421.5 119.5M431.0 104.6L433.8 106.1L431.6 112.0L434.0 113.5L435.4 116.1L438.6 118.4M438.6 118.4L436.6 121.3L434.4 122.2L432.0 125.1L431.8 126.7L434.2 129.6L432.8 132.0L434.8 135.1L434.8 139.1L433.8 142.1M438.6 118.4L440.6 117.1L442.5 116.9L447.1 115.2L449.9 116.3L452.5 119.0M440.6 117.1L442.5 120.1L446.3 121.8L444.5 123.4L446.9 125.1L449.9 129.4L451.5 132.4L451.7 133.0M436.6 121.3L438.8 123.2L438.4 126.9L440.6 125.9L444.5 125.7L446.1 127.5L446.1 129.8L447.7 131.8L446.9 133.8M446.9 133.8L451.7 133.0M446.9 133.8L442.5 134.1L441.2 135.3L442.3 139.1M451.7 133.0L451.5 137.9L448.3 139.3L446.7 140.7L445.5 141.7M436.6 149.6L438.6 150.9L440.4 150.0M455.8 158.2L457.6 160.3L460.2 160.1L462.6 159.2L466.3 159.2L468.3 153.7L471.9 153.9M519.1 167.2L519.1 180.0M485.0 180.6L487.1 180.2L486.8 179.2" fill="none" stroke="#b6b6b6" stroke-width="0.60" stroke-linejoin="round"/><text x="36.5" y="73.0" font-family='"Liberation Sans", sans-serif' font-size="5.8" fill="#a6a6a6" text-anchor="middle">United</text><text x="36.5" y="80.0" font-family='"Liberation Sans", sans-serif' font-size="5.8" fill="#a6a6a6" text-anchor="middle">States</text><text x="30.5" y="118.3" font-family='"Liberation Sans", sans-serif' font-size="5.8" fill="#a6a6a6" text-anchor="middle">Mexico</text><text x="95.0" y="157.5" font-family='"Liberation Sans", sans-serif' font-size="5.8" fill="#a6a6a6" text-anchor="middle">Colombia</text><text x="136.0" y="188.0" font-family='"Liberation Sans", sans-serif' font-size="5.8" fill="#a6a6a6" text-anchor="middle">Brazil</text><text x="89.0" y="189.0" font-family='"Liberation Sans", sans-serif' font-size="5.8" fill="#a6a6a6" text-anchor="middle">Peru</text><text x="239.0" y="60.0" font-family='"Liberation Sans", sans-serif' font-size="5.8" fill="#a6a6a6" text-anchor="middle">France</text><text x="226.0" y="76.0" font-family='"Liberation Sans", sans-serif' font-size="5.8" fill="#a6a6a6" text-anchor="middle">Spain</text><text x="239.0" y="106.0" font-family='"Liberation Sans", sans-serif' font-size="5.8" fill="#a6a6a6" text-anchor="middle">Algeria</text><text x="302.0" y="80.0" font-family='"Liberation Sans", sans-serif' font-size="5.8" fill="#a6a6a6" text-anchor="middle">Turkey</text><text x="342.0" y="95.0" font-family='"Liberation Sans", sans-serif' font-size="5.8" fill="#a6a6a6" text-anchor="middle">Iran</text><text x="390.0" y="118.0" font-family='"Liberation Sans", sans-serif' font-size="5.8" fill="#a6a6a6" text-anchor="middle">India</text><text x="432.0" y="90.0" font-family='"Liberation Sans", sans-serif' font-size="5.8" fill="#a6a6a6" text-anchor="middle">China</text><text x="509.0" y="88.0" font-family='"Liberation Sans", sans-serif' font-size="5.8" fill="#a6a6a6" text-anchor="middle">Japan</text><text x="463.0" y="167.0" font-family='"Liberation Sans", sans-serif' font-size="5.8" fill="#a6a6a6" text-anchor="middle">Indonesia</text><g transform="translate(-15,-172)"><g fill-opacity="0.84" stroke="#4a4a4a" stroke-width="0.7" stroke-opacity="0.7"><path d="M244.20 299.60L245.40 292.80A6.90 6.90 0 1 1 244.20 292.70Z" fill="#3a93c4"/><path d="M244.20 299.60L244.20 292.70A6.90 6.90 0 0 1 245.40 292.80Z" fill="#ef655f"/></g><g fill-opacity="0.84" stroke="#4a4a4a" stroke-width="0.7" stroke-opacity="0.7"><path d="M218.60 306.40L226.33 304.33A8.00 8.00 0 1 1 218.04 298.42Z" fill="#3a93c4"/><path d="M218.60 306.40L218.60 298.40A8.00 8.00 0 0 1 226.33 304.33Z" fill="#ef655f"/><path d="M218.60 306.40L218.04 298.42A8.00 8.00 0 0 1 218.60 298.40Z" fill="#f5a55a"/></g><g fill-opacity="0.84" stroke="#4a4a4a" stroke-width="0.7" stroke-opacity="0.7"><path d="M246.20 311.00L251.86 303.75A9.20 9.20 0 1 1 240.29 303.95Z" fill="#3a93c4"/><path d="M246.20 311.00L246.20 301.80A9.20 9.20 0 0 1 251.86 303.75Z" fill="#ef655f"/><path d="M246.20 311.00L240.29 303.95A9.20 9.20 0 0 1 246.20 301.80Z" fill="#f5a55a"/></g><g fill-opacity="0.84" stroke="#4a4a4a" stroke-width="0.7" stroke-opacity="0.7"><path d="M246.20 322.40L249.67 314.97A8.20 8.20 0 1 1 242.73 314.97Z" fill="#3a93c4"/><path d="M246.20 322.40L246.20 314.20A8.20 8.20 0 0 1 249.67 314.97Z" fill="#ef655f"/><path d="M246.20 322.40L242.73 314.97A8.20 8.20 0 0 1 246.20 314.20Z" fill="#f5a55a"/></g><g fill-opacity="0.84" stroke="#4a4a4a" stroke-width="0.7" stroke-opacity="0.7"><path d="M264.50 317.90L270.11 309.26A10.30 10.30 0 1 1 264.50 307.60Z" fill="#3a93c4"/><path d="M264.50 317.90L264.50 307.60A10.30 10.30 0 0 1 270.11 309.26Z" fill="#ef655f"/></g><g fill-opacity="0.84" stroke="#4a4a4a" stroke-width="0.7" stroke-opacity="0.7"><path d="M267.80 260.80L273.98 262.46A6.40 6.40 0 1 1 263.69 255.90Z" fill="#3a93c4"/><path d="M267.80 260.80L267.80 254.40A6.40 6.40 0 0 1 273.98 262.46Z" fill="#ef655f"/><path d="M267.80 260.80L263.69 255.90A6.40 6.40 0 0 1 267.80 254.40Z" fill="#f5a55a"/></g><g fill-opacity="0.84" stroke="#4a4a4a" stroke-width="0.7" stroke-opacity="0.7"><path d="M306.20 282.40L306.20 277.00A5.40 5.40 0 1 1 304.89 277.16Z" fill="#3a93c4"/><path d="M306.20 282.40L304.89 277.16A5.40 5.40 0 0 1 306.20 277.00Z" fill="#f5a55a"/></g><g fill-opacity="0.84" stroke="#4a4a4a" stroke-width="0.7" stroke-opacity="0.7"><path d="M326.30 319.70L329.69 310.40A9.90 9.90 0 1 1 322.12 310.73Z" fill="#3a93c4"/><path d="M326.30 319.70L326.30 309.80A9.90 9.90 0 0 1 329.69 310.40Z" fill="#ef655f"/><path d="M326.30 319.70L322.12 310.73A9.90 9.90 0 0 1 326.30 309.80Z" fill="#f5a55a"/></g><g fill-opacity="0.84" stroke="#4a4a4a" stroke-width="0.7" stroke-opacity="0.7"><path d="M308.50 340.80L315.70 346.84A9.40 9.40 0 1 1 304.53 332.28Z" fill="#3a93c4"/><path d="M308.50 340.80L308.50 331.40A9.40 9.40 0 0 1 315.70 346.84Z" fill="#ef655f"/><path d="M308.50 340.80L304.53 332.28A9.40 9.40 0 0 1 308.50 331.40Z" fill="#f5a55a"/></g><g fill-opacity="0.84" stroke="#4a4a4a" stroke-width="0.7" stroke-opacity="0.7"><circle cx="316.00" cy="363.70" r="5.10" fill="#3a93c4"/></g><g fill-opacity="0.84" stroke="#4a4a4a" stroke-width="0.7" stroke-opacity="0.7"><path d="M299.50 366.50L299.96 359.92A6.60 6.60 0 1 1 299.50 359.90Z" fill="#3a93c4"/><path d="M299.50 366.50L299.50 359.90A6.60 6.60 0 0 1 299.96 359.92Z" fill="#ef655f"/></g><g fill-opacity="0.84" stroke="#4a4a4a" stroke-width="0.7" stroke-opacity="0.7"><path d="M388.40 224.60L391.85 216.07A9.20 9.20 0 1 1 383.80 216.63Z" fill="#3a93c4"/><path d="M388.40 224.60L388.40 215.40A9.20 9.20 0 0 1 391.85 216.07Z" fill="#ef655f"/><path d="M388.40 224.60L383.80 216.63A9.20 9.20 0 0 1 388.40 215.40Z" fill="#f5a55a"/></g><g fill-opacity="0.84" stroke="#4a4a4a" stroke-width="0.7" stroke-opacity="0.7"><path d="M376.70 244.90L378.43 236.78A8.30 8.30 0 1 1 376.12 236.62Z" fill="#3a93c4"/><path d="M376.70 244.90L376.70 236.60A8.30 8.30 0 0 1 378.43 236.78Z" fill="#ef655f"/><path d="M376.70 244.90L376.12 236.62A8.30 8.30 0 0 1 376.70 236.60Z" fill="#f5a55a"/></g><g fill-opacity="0.84" stroke="#4a4a4a" stroke-width="0.7" stroke-opacity="0.7"><path d="M398.70 244.80L400.30 238.81A6.20 6.20 0 1 1 396.58 238.97Z" fill="#3a93c4"/><path d="M398.70 244.80L398.70 238.60A6.20 6.20 0 0 1 400.30 238.81Z" fill="#ef655f"/><path d="M398.70 244.80L396.58 238.97A6.20 6.20 0 0 1 398.70 238.60Z" fill="#f5a55a"/></g><g fill-opacity="0.84" stroke="#4a4a4a" stroke-width="0.7" stroke-opacity="0.7"><path d="M394.00 254.00L394.50 249.23A4.80 4.80 0 1 1 394.00 249.20Z" fill="#3a93c4"/><path d="M394.00 254.00L394.00 249.20A4.80 4.80 0 0 1 394.50 249.23Z" fill="#ef655f"/></g><g fill-opacity="0.84" stroke="#4a4a4a" stroke-width="0.7" stroke-opacity="0.7"><path d="M382.10 278.10L385.08 269.92A8.70 8.70 0 1 1 379.85 269.70Z" fill="#3a93c4"/><path d="M382.10 278.10L382.10 269.40A8.70 8.70 0 0 1 385.08 269.92Z" fill="#ef655f"/><path d="M382.10 278.10L379.85 269.70A8.70 8.70 0 0 1 382.10 269.40Z" fill="#f5a55a"/></g><g fill-opacity="0.84" stroke="#4a4a4a" stroke-width="0.7" stroke-opacity="0.7"><path d="M534.10 348.10L540.57 343.57A7.90 7.90 0 1 1 528.05 343.02Z" fill="#3a93c4"/><path d="M534.10 348.10L534.10 340.20A7.90 7.90 0 0 1 540.57 343.57Z" fill="#ef655f"/><path d="M534.10 348.10L528.05 343.02A7.90 7.90 0 0 1 534.10 340.20Z" fill="#f5a55a"/></g></g></svg>
<div class="ctrl" style="top:178.3px;height:17.6px">
  <svg width="16" height="16" viewBox="0 0 16 16" style="position:absolute;left:0;top:0"><circle cx="8.9" cy="6.9" r="2.8" fill="none" stroke="#555" stroke-width="1"/><path d="M6.9 9L4.3 11.7" stroke="#555" stroke-width="1.3" fill="none"/></svg>
</div>
<div class="ctrl" style="top:204.2px;height:63.2px">
  <svg width="16" height="62" viewBox="0 0 16 62" style="position:absolute;left:0;top:0">
    <path d="M4.6 8.4H11M7.8 5.2V11.6" stroke="#444" stroke-width="1.15" fill="none"/>
    <path d="M5 21.9H10.8" stroke="#8a8a8a" stroke-width="1.3" fill="none"/>
    <path d="M3.1 35.6L7.9 31L12.7 35.6M4.5 34.8V39.6H11.3V34.8M6.7 39.6V36.6H9.1V39.6" stroke="#4a4a4a" stroke-width="0.95" fill="none"/>
    <path d="M1.5 44.6H14.2" stroke="#dcdcdc" stroke-width="0.8"/>
    <path d="M6 50.3L10.4 53.4L6 56.5Z" fill="#444"/>
  </svg>
</div>
<div class="abs" style="left:15px;top:360.5px;width:117px;height:10.5px;background:rgba(255,255,255,.7)"></div>
<div class="t" style="left:17.00px;top:362.00px;font-size:7.30px;line-height:9.00px;color:#555;letter-spacing:-0.048px;">&copy; 2020 Mapbox &nbsp;&copy; OpenStreetMap</div>
<div class="lg" style="left:17.3px;background:#ee6f6a"></div><div class="t" style="left:29.40px;top:379.00px;font-size:7.90px;line-height:9.00px;color:#5a5a5a;letter-spacing:-0.144px;transform:scaleY(1.100);transform-origin:0 7px;">Extension</div>
<div class="lg" style="left:104.0px;background:#4e9ac7"></div><div class="t" style="left:116.00px;top:379.00px;font-size:7.90px;line-height:9.00px;color:#5a5a5a;letter-spacing:-0.176px;transform:scaleY(1.100);transform-origin:0 7px;">New measure</div>
<div class="lg" style="left:190.7px;background:#f4ad69"></div><div class="t" style="left:203.00px;top:379.00px;font-size:7.90px;line-height:9.00px;color:#5a5a5a;letter-spacing:-0.201px;transform:scaleY(1.100);transform-origin:0 7px;">Phase-out</div>
<div class="abs" style="left:15px;top:397px;width:582px;height:24.6px;background:#1da4d7"></div>
<div class="t" style="left:20.40px;top:403.00px;font-size:11.90px;line-height:14.00px;color:#fff;letter-spacing:-0.008px;font-weight:bold;">Country policies</div>
<div class="hl" style="left:15px;top:440.3px;width:571px"></div>
<div class="hl" style="left:526px;top:423.2px;width:61px"></div>
<div class="vl" style="left:89.5px;top:421.4px;height:209px"></div>
<div class="vl" style="left:154.0px;top:421.4px;height:209px"></div>
<div class="vl" style="left:235.5px;top:421.4px;height:209px"></div>
<div class="vl" style="left:526.0px;top:421.4px;height:209px"></div>
<div class="vl" style="left:586.0px;top:421.4px;height:209px"></div>
<div class="abs" style="left:15px;top:421.4px;width:1px;height:209px;border-left:1px dotted #addbf1"></div>
<div class="hl" style="left:236px;top:503.6px;width:351px"></div>
<div class="hl" style="left:236px;top:566.8px;width:351px"></div>
<div class="abs" style="left:587.5px;top:441px;width:9px;height:189px;background:#f1f1f1"></div>
<div class="abs" style="left:587.5px;top:441px;width:9px;height:9px;background:#dcdcdc"></div>
<div class="t" style="left:32.90px;top:427.00px;font-size:10.30px;line-height:11.00px;color:#3a3a3a;letter-spacing:0.105px;-webkit-text-stroke:0.3px #3a3a3a;">Country</div>
<div class="t" style="left:107.10px;top:427.00px;font-size:10.30px;line-height:11.00px;color:#3a3a3a;letter-spacing:0.054px;-webkit-text-stroke:0.3px #3a3a3a;">Policy</div>
<div class="t" style="left:164.25px;top:427.00px;font-size:10.30px;line-height:11.00px;color:#3a3a3a;letter-spacing:0.041px;-webkit-text-stroke:0.3px #3a3a3a;">Policy Action</div>
<div class="t" style="left:339.35px;top:427.00px;font-size:10.30px;line-height:11.00px;color:#3a3a3a;letter-spacing:0.025px;-webkit-text-stroke:0.3px #3a3a3a;">Policy Description</div>
<div class="t" style="left:544.15px;top:427.00px;font-size:10.30px;line-height:11.00px;color:#3a3a3a;letter-spacing:0.236px;-webkit-text-stroke:0.3px #3a3a3a;">Date</div>
<div class="t" style="left:30.75px;top:444.00px;font-size:11.30px;line-height:12.00px;color:#2a8dc5;letter-spacing:0.484px;-webkit-text-stroke:0.3px #2a8dc5;">Burkina</div>
<div class="t" style="left:39.40px;top:460.00px;font-size:11.30px;line-height:12.00px;color:#2a8dc5;letter-spacing:-0.080px;-webkit-text-stroke:0.3px #2a8dc5;">Faso</div>
<div class="t" style="left:94.40px;top:618.00px;font-size:10.40px;line-height:11.00px;color:#2a8dc5;letter-spacing:-0.011px;-webkit-text-stroke:0.3px #2a8dc5;">Broad fiscal</div>
<div class="t" style="left:174.90px;top:541.00px;font-size:9.60px;line-height:11.00px;color:#4aa3d3;letter-spacing:-0.024px;">Financial</div>
<div class="t" style="left:169.40px;top:555.00px;font-size:9.60px;line-height:11.00px;color:#4aa3d3;letter-spacing:0.228px;">support for</div>
<div class="t" style="left:179.59px;top:569.00px;font-size:9.60px;line-height:11.00px;color:#4aa3d3;">private</div>
<div class="t" style="left:171.60px;top:582.00px;font-size:9.60px;line-height:11.00px;color:#4aa3d3;letter-spacing:-0.114px;">companies</div>
<div class="t" style="left:239.40px;top:468.00px;font-size:8.00px;line-height:9.00px;color:#7a7a7a;letter-spacing:-0.011px;">Special window fund for small and meidum enterprise/industry</div>
<div class="t" style="left:239.40px;top:526.00px;font-size:8.00px;line-height:9.00px;color:#7a7a7a;letter-spacing:0.022px;">This fund is intended particularly for women for the revival of their activities. The</div>
<div class="t" style="left:239.40px;top:537.00px;font-size:8.00px;line-height:9.00px;color:#7a7a7a;">trade activities of vegetables and fruits are prioritized.</div>
<div class="t" style="left:239.40px;top:589.00px;font-size:8.00px;line-height:9.00px;color:#7a7a7a;letter-spacing:-0.045px;">This is to make available to companies experiencing difficulties, a fund to avoid</div>
<div class="t" style="left:239.40px;top:600.00px;font-size:8.00px;line-height:9.00px;color:#7a7a7a;">their bankruptcy</div>
<div class="t" style="left:530.50px;top:445.00px;font-size:8.00px;line-height:9.00px;color:#6a6a6a;letter-spacing:0.003px;">March 21,</div>
<div class="t" style="left:539.95px;top:456.00px;font-size:8.00px;line-height:9.00px;color:#6a6a6a;letter-spacing:-0.074px;">2020</div>
<div class="t" style="left:530.45px;top:508.00px;font-size:8.00px;line-height:9.00px;color:#6a6a6a;letter-spacing:0.100px;">April 2,</div>
<div class="t" style="left:535.20px;top:520.00px;font-size:8.00px;line-height:9.00px;color:#6a6a6a;letter-spacing:-0.149px;">2020</div>
<div class="t" style="left:530.45px;top:571.00px;font-size:8.00px;line-height:9.00px;color:#6a6a6a;letter-spacing:0.100px;">April 2,</div>
<div class="t" style="left:535.20px;top:583.00px;font-size:8.00px;line-height:9.00px;color:#6a6a6a;letter-spacing:-0.149px;">2020</div>
<div class="abs" style="left:681px;top:169px;width:172px;height:470px;border-top:1px solid #9a9a9a;border-right:1px solid #a5a5a5;border-left:2px solid #bcbcbc;background:#fff"></div>
<div class="t" style="left:685.30px;top:174.00px;font-size:7.20px;line-height:9.00px;color:#2d8bc0;letter-spacing:-0.263px;transform:scaleY(1.250);transform-origin:0 7px;-webkit-text-stroke:0.25px #2d8bc0;">1. SELECT&nbsp; POLICY RESPONSE</div>
<div class="cb" style="top:185.80px"><svg width="10" height="9" viewBox="0 0 10 9"><path d="M1.7 4.4L3.7 6.6L7.3 1.5" fill="none" stroke="#3c3c3c" stroke-width="0.95"/></svg></div><div class="t" style="left:700.00px;top:187.00px;font-size:7.95px;line-height:9.00px;color:#4d4d4d;transform:scaleY(1.130);transform-origin:0 7px;">(All)</div>
<div class="cb" style="top:197.80px"><svg width="10" height="9" viewBox="0 0 10 9"><path d="M1.7 4.4L3.7 6.6L7.3 1.5" fill="none" stroke="#3c3c3c" stroke-width="0.95"/></svg></div><div class="t" style="left:700.00px;top:199.00px;font-size:7.95px;line-height:9.00px;color:#4d4d4d;transform:scaleY(1.130);transform-origin:0 7px;">Broad fiscal policies</div>
<div class="cb" style="top:209.80px"><svg width="10" height="9" viewBox="0 0 10 9"><path d="M1.7 4.4L3.7 6.6L7.3 1.5" fill="none" stroke="#3c3c3c" stroke-width="0.95"/></svg></div><div class="t" style="left:700.00px;top:211.00px;font-size:7.95px;line-height:9.00px;color:#4d4d4d;transform:scaleY(1.130);transform-origin:0 7px;">Business policies</div>
<div class="cb" style="top:222.80px"><svg width="10" height="9" viewBox="0 0 10 9"><path d="M1.7 4.4L3.7 6.6L7.3 1.5" fill="none" stroke="#3c3c3c" stroke-width="0.95"/></svg></div><div class="t" style="left:700.00px;top:224.00px;font-size:7.95px;line-height:9.00px;color:#4d4d4d;transform:scaleY(1.130);transform-origin:0 7px;">COVID-19 specific health policies</div>
<div class="cb" style="top:234.80px"><svg width="10" height="9" viewBox="0 0 10 9"><path d="M1.7 4.4L3.7 6.6L7.3 1.5" fill="none" stroke="#3c3c3c" stroke-width="0.95"/></svg></div><div class="t" style="left:700.00px;top:236.00px;font-size:7.95px;line-height:9.00px;color:#4d4d4d;transform:scaleY(1.130);transform-origin:0 7px;">Farm fiscal policies</div>
<div class="cb" style="top:246.80px"><svg width="10" height="9" viewBox="0 0 10 9"><path d="M1.7 4.4L3.7 6.6L7.3 1.5" fill="none" stroke="#3c3c3c" stroke-width="0.95"/></svg></div><div class="t" style="left:700.00px;top:248.00px;font-size:7.95px;line-height:9.00px;color:#4d4d4d;transform:scaleY(1.130);transform-origin:0 7px;">Governance restrictions</div>
<div class="cb" style="top:259.80px"><svg width="10" height="9" viewBox="0 0 10 9"><path d="M1.7 4.4L3.7 6.6L7.3 1.5" fill="none" stroke="#3c3c3c" stroke-width="0.95"/></svg></div><div class="t" style="left:700.00px;top:261.00px;font-size:7.95px;line-height:9.00px;color:#4d4d4d;transform:scaleY(1.130);transform-origin:0 7px;">Monetary and financial policies</div>
<div class="cb" style="top:271.80px"><svg width="10" height="9" viewBox="0 0 10 9"><path d="M1.7 4.4L3.7 6.6L7.3 1.5" fill="none" stroke="#3c3c3c" stroke-width="0.95"/></svg></div><div class="t" style="left:700.00px;top:273.00px;font-size:7.95px;line-height:9.00px;color:#4d4d4d;transform:scaleY(1.130);transform-origin:0 7px;">Restrictions on population movements</div>
<div class="cb" style="top:283.80px"><svg width="10" height="9" viewBox="0 0 10 9"><path d="M1.7 4.4L3.7 6.6L7.3 1.5" fill="none" stroke="#3c3c3c" stroke-width="0.95"/></svg></div><div class="t" style="left:700.00px;top:285.00px;font-size:7.95px;line-height:9.00px;color:#4d4d4d;transform:scaleY(1.130);transform-origin:0 7px;">Social protection policies</div>
<div class="cb" style="top:296.80px"><svg width="10" height="9" viewBox="0 0 10 9"><path d="M1.7 4.4L3.7 6.6L7.3 1.5" fill="none" stroke="#3c3c3c" stroke-width="0.95"/></svg></div><div class="t" style="left:700.00px;top:298.00px;font-size:7.95px;line-height:9.00px;color:#4d4d4d;transform:scaleY(1.130);transform-origin:0 7px;">Trade policies</div>
<div class="t" style="left:685.30px;top:325.00px;font-size:7.20px;line-height:9.00px;color:#2d8bc0;letter-spacing:-0.207px;transform:scaleY(1.250);transform-origin:0 7px;-webkit-text-stroke:0.25px #2d8bc0;">2. POLICY CHANGE</div>
<div class="cb" style="top:335.80px"><svg width="10" height="9" viewBox="0 0 10 9"><path d="M1.7 4.4L3.7 6.6L7.3 1.5" fill="none" stroke="#3c3c3c" stroke-width="0.95"/></svg></div><div class="t" style="left:700.00px;top:337.00px;font-size:7.95px;line-height:9.00px;color:#4d4d4d;transform:scaleY(1.130);transform-origin:0 7px;">(All)</div>
<div class="cb" style="top:347.80px"><svg width="10" height="9" viewBox="0 0 10 9"><path d="M1.7 4.4L3.7 6.6L7.3 1.5" fill="none" stroke="#3c3c3c" stroke-width="0.95"/></svg></div><div class="t" style="left:700.00px;top:349.00px;font-size:7.95px;line-height:9.00px;color:#4d4d4d;transform:scaleY(1.130);transform-origin:0 7px;">Extension</div>
<div class="cb" style="top:360.80px"><svg width="10" height="9" viewBox="0 0 10 9"><path d="M1.7 4.4L3.7 6.6L7.3 1.5" fill="none" stroke="#3c3c3c" stroke-width="0.95"/></svg></div><div class="t" style="left:700.00px;top:362.00px;font-size:7.95px;line-height:9.00px;color:#4d4d4d;transform:scaleY(1.130);transform-origin:0 7px;">New measure</div>
<div class="cb" style="top:372.80px"><svg width="10" height="9" viewBox="0 0 10 9"><path d="M1.7 4.4L3.7 6.6L7.3 1.5" fill="none" stroke="#3c3c3c" stroke-width="0.95"/></svg></div><div class="t" style="left:700.00px;top:374.00px;font-size:7.95px;line-height:9.00px;color:#4d4d4d;transform:scaleY(1.130);transform-origin:0 7px;">Phase-out</div>
<div class="t" style="left:685.30px;top:403.00px;font-size:7.20px;line-height:9.00px;color:#2d8bc0;letter-spacing:-0.213px;transform:scaleY(1.250);transform-origin:0 7px;-webkit-text-stroke:0.25px #2d8bc0;">3. SELECT ACTION</div>
<div class="cb" style="top:413.80px"><svg width="10" height="9" viewBox="0 0 10 9"><path d="M1.7 4.4L3.7 6.6L7.3 1.5" fill="none" stroke="#3c3c3c" stroke-width="0.95"/></svg></div><div class="t" style="left:700.00px;top:415.00px;font-size:7.95px;line-height:9.00px;color:#4d4d4d;transform:scaleY(1.130);transform-origin:0 7px;">(All)</div>
<div class="cb" style="top:426.80px"><svg width="10" height="9" viewBox="0 0 10 9"><path d="M1.7 4.4L3.7 6.6L7.3 1.5" fill="none" stroke="#3c3c3c" stroke-width="0.95"/></svg></div><div class="t" style="left:700.00px;top:428.00px;font-size:7.95px;line-height:9.00px;color:#4d4d4d;transform:scaleY(1.130);transform-origin:0 7px;">Anti crisis package</div>
<div class="cb" style="top:438.80px"><svg width="10" height="9" viewBox="0 0 10 9"><path d="M1.7 4.4L3.7 6.6L7.3 1.5" fill="none" stroke="#3c3c3c" stroke-width="0.95"/></svg></div><div class="t" style="left:700.00px;top:440.00px;font-size:7.95px;line-height:9.00px;color:#4d4d4d;transform:scaleY(1.130);transform-origin:0 7px;">Ban on street vending</div>
<div class="cb" style="top:450.80px"><svg width="10" height="9" viewBox="0 0 10 9"><path d="M1.7 4.4L3.7 6.6L7.3 1.5" fill="none" stroke="#3c3c3c" stroke-width="0.95"/></svg></div><div class="t" style="left:700.00px;top:452.00px;font-size:7.95px;line-height:9.00px;color:#4d4d4d;transform:scaleY(1.130);transform-origin:0 7px;">Bans on public gatherings</div>
<div class="cb" style="top:463.80px"><svg width="10" height="9" viewBox="0 0 10 9"><path d="M1.7 4.4L3.7 6.6L7.3 1.5" fill="none" stroke="#3c3c3c" stroke-width="0.95"/></svg></div><div class="t" style="left:700.00px;top:465.00px;font-size:7.95px;line-height:9.00px;color:#4d4d4d;transform:scaleY(1.130);transform-origin:0 7px;">Budget adjustments</div>
<div class="cb" style="top:475.80px"><svg width="10" height="9" viewBox="0 0 10 9"><path d="M1.7 4.4L3.7 6.6L7.3 1.5" fill="none" stroke="#3c3c3c" stroke-width="0.95"/></svg></div><div class="t" style="left:700.00px;top:477.00px;font-size:7.95px;line-height:9.00px;color:#4d4d4d;transform:scaleY(1.130);transform-origin:0 7px;">Cash transfers</div>
<div class="cb" style="top:487.80px"><svg width="10" height="9" viewBox="0 0 10 9"><path d="M1.7 4.4L3.7 6.6L7.3 1.5" fill="none" stroke="#3c3c3c" stroke-width="0.95"/></svg></div><div class="t" style="left:700.00px;top:489.00px;font-size:7.95px;line-height:9.00px;color:#4d4d4d;transform:scaleY(1.130);transform-origin:0 7px;">Closure of entertainment</div>
<div class="cb" style="top:500.80px"><svg width="10" height="9" viewBox="0 0 10 9"><path d="M1.7 4.4L3.7 6.6L7.3 1.5" fill="none" stroke="#3c3c3c" stroke-width="0.95"/></svg></div><div class="t" style="left:700.00px;top:502.00px;font-size:7.95px;line-height:9.00px;color:#4d4d4d;transform:scaleY(1.130);transform-origin:0 7px;">Closure of restaurants</div>
<div class="cb" style="top:512.80px"><svg width="10" height="9" viewBox="0 0 10 9"><path d="M1.7 4.4L3.7 6.6L7.3 1.5" fill="none" stroke="#3c3c3c" stroke-width="0.95"/></svg></div><div class="t" style="left:700.00px;top:514.00px;font-size:7.95px;line-height:9.00px;color:#4d4d4d;transform:scaleY(1.130);transform-origin:0 7px;">Curfews</div>
<div class="cb" style="top:525.80px"><svg width="10" height="9" viewBox="0 0 10 9"><path d="M1.7 4.4L3.7 6.6L7.3 1.5" fill="none" stroke="#3c3c3c" stroke-width="0.95"/></svg></div><div class="t" style="left:700.00px;top:527.00px;font-size:7.95px;line-height:9.00px;color:#4d4d4d;transform:scaleY(1.130);transform-origin:0 7px;">Debt restructuring</div>
<div class="cb" style="top:537.80px"><svg width="10" height="9" viewBox="0 0 10 9"><path d="M1.7 4.4L3.7 6.6L7.3 1.5" fill="none" stroke="#3c3c3c" stroke-width="0.95"/></svg></div><div class="t" style="left:700.00px;top:539.00px;font-size:7.95px;line-height:9.00px;color:#4d4d4d;transform:scaleY(1.130);transform-origin:0 7px;">Defer loan repayment</div>
<div class="cb" style="top:549.80px"><svg width="10" height="9" viewBox="0 0 10 9"><path d="M1.7 4.4L3.7 6.6L7.3 1.5" fill="none" stroke="#3c3c3c" stroke-width="0.95"/></svg></div><div class="t" style="left:700.00px;top:551.00px;font-size:7.95px;line-height:9.00px;color:#4d4d4d;transform:scaleY(1.130);transform-origin:0 7px;">Disinfection</div>
<div class="cb" style="top:562.80px"><svg width="10" height="9" viewBox="0 0 10 9"><path d="M1.7 4.4L3.7 6.6L7.3 1.5" fill="none" stroke="#3c3c3c" stroke-width="0.95"/></svg></div><div class="t" style="left:700.00px;top:564.00px;font-size:7.95px;line-height:9.00px;color:#4d4d4d;transform:scaleY(1.130);transform-origin:0 7px;">Eliminate ICT fees</div>
<div class="cb" style="top:574.80px"><svg width="10" height="9" viewBox="0 0 10 9"><path d="M1.7 4.4L3.7 6.6L7.3 1.5" fill="none" stroke="#3c3c3c" stroke-width="0.95"/></svg></div><div class="t" style="left:700.00px;top:576.00px;font-size:7.95px;line-height:9.00px;color:#4d4d4d;transform:scaleY(1.130);transform-origin:0 7px;">Exchange rate depreciation/devaluati...</div>
<div class="cb" style="top:586.80px"><svg width="10" height="9" viewBox="0 0 10 9"><path d="M1.7 4.4L3.7 6.6L7.3 1.5" fill="none" stroke="#3c3c3c" stroke-width="0.95"/></svg></div><div class="t" style="left:700.00px;top:588.00px;font-size:7.95px;line-height:9.00px;color:#4d4d4d;transform:scaleY(1.130);transform-origin:0 7px;">Expanded credit options</div>
<div class="cb" style="top:599.80px"><svg width="10" height="9" viewBox="0 0 10 9"><path d="M1.7 4.4L3.7 6.6L7.3 1.5" fill="none" stroke="#3c3c3c" stroke-width="0.95"/></svg></div><div class="t" style="left:700.00px;top:601.00px;font-size:7.95px;line-height:9.00px;color:#4d4d4d;transform:scaleY(1.130);transform-origin:0 7px;">Expanded healthcare insurance</div>
<div class="cb" style="top:611.80px"><svg width="10" height="9" viewBox="0 0 10 9"><path d="M1.7 4.4L3.7 6.6L7.3 1.5" fill="none" stroke="#3c3c3c" stroke-width="0.95"/></svg></div><div class="t" style="left:700.00px;top:613.00px;font-size:7.95px;line-height:9.00px;color:#4d4d4d;transform:scaleY(1.130);transform-origin:0 7px;">Expanded investment opportunities</div>
<div class="cb" style="top:623.80px"><svg width="10" height="9" viewBox="0 0 10 9"><path d="M1.7 4.4L3.7 6.6L7.3 1.5" fill="none" stroke="#3c3c3c" stroke-width="0.95"/></svg></div><div class="t" style="left:700.00px;top:625.00px;font-size:7.95px;line-height:9.00px;color:#4d4d4d;transform:scaleY(1.130);transform-origin:0 7px;">Expanded testing</div>
</div></body></html>
